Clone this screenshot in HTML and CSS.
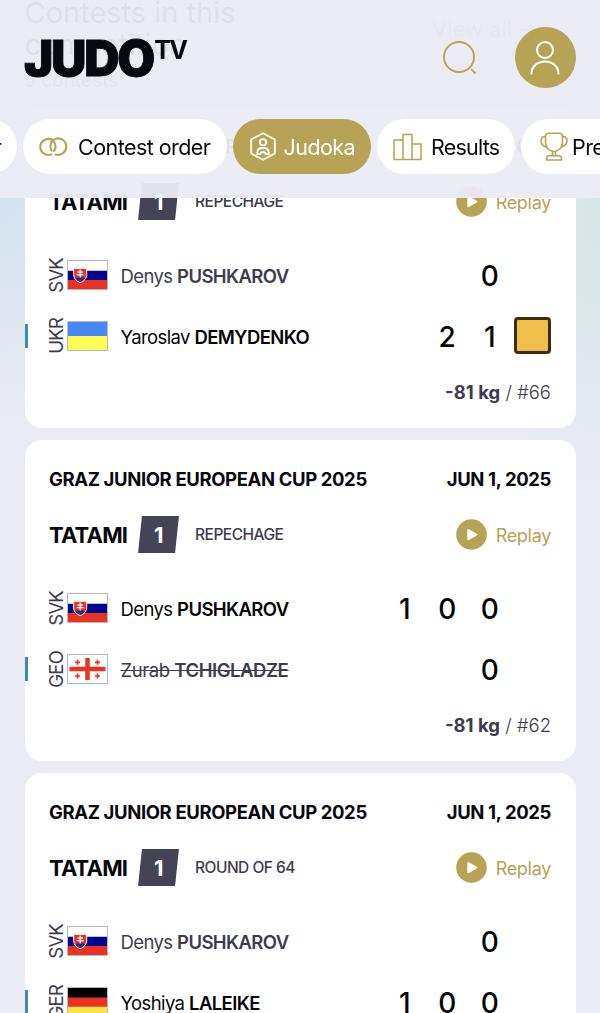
FILE: index.html
```html
<!DOCTYPE html>
<html lang="en">
<head>
  <meta charset="UTF-8">
  <meta name="viewport" content="width=device-width, initial-scale=1.0">
  <title>JudoTV - Judoka</title>
  <link rel="stylesheet" href="styles.css">
</head>
<body>

  <!-- Shared icons -->
  <svg class="sprite" width="0" height="0">
    <symbol id="play" viewBox="0 0 31 31">
      <circle cx="15.5" cy="15.5" r="15.3" fill="#b7a356"/>
      <path d="M12.3 11v9.2l8-4.6z" fill="#fff" stroke="#fff" stroke-width="2" stroke-linejoin="round"/>
    </symbol>
    <symbol id="flag-svk" viewBox="0 0 39 28">
      <path fill="#fff" d="M0 0h39v10H0z"/>
      <path fill="#00078d" d="M0 9.7h39v9.6H0z"/>
      <path fill="#e83323" d="M0 19h39v9H0z"/>
      <path d="M5.7 7.3h13v6.5c0 4-3 6.300-6.500 7.900c-3.500-1.600-6.500-3.900-6.500-7.900z" fill="#e83323" stroke="#fff" stroke-width="1"/>
      <path d="M7.500 17.500q2-2 4.700-1.500q2.700-.5 4.700 1.500q-2 2.400-4.700 3.500q-2.700-1.100-4.700-3.500z" fill="#1b2f8f"/>
      <path d="M12.200 8.500v8M9.600 11h5.200M8.700 13.600h7" stroke="#fff" stroke-width="1.300"/>
    </symbol>
  </svg>

  <!-- Sticky header -->
  <header class="header">
    <div class="topbar">
      <div class="logo"><span class="logo-main">JUDO</span><span class="logo-tv">TV</span></div>
      <div class="actions">
        <svg class="search" width="36" height="36" viewBox="0 0 36 36" fill="none" stroke="#b7a356" stroke-width="1.9">
          <circle cx="17" cy="17" r="15"/>
          <path d="M29.200 29.200l4.300 4.300"/>
        </svg>
        <div class="avatar">
          <svg width="30" height="36" viewBox="0 0 30 36" fill="none" stroke="#fff" stroke-width="2">
            <circle cx="15" cy="10" r="8"/>
            <path d="M1.500 34.500v-1.500a13.500 11.500 0 0 1 27 0v1.500"/>
          </svg>
        </div>
      </div>
    </div>
    <nav class="tabs">
      <div class="tab tab-first">Calendar</div>
      <div class="tab tab-order">
        <svg width="30" height="20" viewBox="0 0 30 20" fill="none" stroke="#b7a356" stroke-width="2.100">
          <path d="M11.800 2.300A8 8 0 1 0 13 17"/>
          <path d="M9.500 1.600q6 .6 7 7.400q.2 3.700-2.200 5.700"/>
          <path d="M16 17.200a8.200 8.200 0 1 0 1-15.500q-5.800 2-5.500 8.300q.3 2.600 1.700 4.200"/>
        </svg>
        <span>Contest order</span>
      </div>
      <div class="tab tab-judoka active">
        <svg width="26" height="29" viewBox="0 0 26 29" fill="none" stroke="#fff" stroke-width="1.800" stroke-linejoin="round">
          <path d="M13 1.200L24.800 7.500v14L13 27.800L1.200 21.500v-14z"/>
          <circle cx="13" cy="10.300" r="3.200"/>
          <path d="M7.300 22.200v-1.700q0-4.500 5.700-4.500t5.700 4.500v1.700h-3q-.4-2.200-2.700-2.200t-2.700 2.200z"/>
        </svg>
        <span>Judoka</span>
      </div>
      <div class="tab tab-results">
        <svg width="29" height="28" viewBox="0 0 29 28" fill="none" stroke="#b7a356" stroke-width="1.500">
          <path d="M1 7h9v19.500H1zM10 1.500h9v25h-9zM19 11h9v15.500h-9z"/>
        </svg>
        <span>Results</span>
      </div>
      <div class="tab tab-prize">
        <svg width="28" height="29" viewBox="0 0 28 29" fill="none" stroke="#b7a356" stroke-width="1.600" stroke-linejoin="round">
          <path d="M5.500 4q0-2.700 3-2.700h11q3 0 3 2.700v6.500q0 7-8.500 9.200q-8.500-2.200-8.500-9.200z"/>
          <path d="M5.500 4.500Q1 4.500 1 9q0 4.500 5.700 6.200M22.500 4.500Q27 4.500 27 9q0 4.500-5.700 6.200M12.500 19.500v4.300M15.500 19.500v4.300M6.500 28v-1.500q0-2.700 3-2.700h9q3 0 3 2.700V28z"/>
        </svg>
        <span>Prelims</span>
      </div>
    </nav>
  </header>

  <!-- Contests -->
  <main class="page">
    <div class="intro">
      <div>
        <h2>Contests in this<br>competition</h2>
        <p>5 contests</p>
      </div>
      <a class="view-all">View all &rarr;</a>
    </div>

    <article class="card">
      <div class="card-head"><span>GRAZ JUNIOR EUROPEAN CUP 2025</span><span class="date">JUN 1, 2025</span></div>
      <div class="mat">
        <b>TATAMI</b><span class="mat-no"><i>1</i></span><span class="round">REPECHAGE</span>
        <a class="replay"><svg width="31" height="31"><use href="#play"/></svg><span>Replay</span></a>
      </div>
      <div class="fighter lost">
        <span class="code">SVK</span>
        <svg class="flag"><use href="#flag-svk"/></svg>
        <span class="name">Denys <b>PUSHKAROV</b></span>
        <span class="score"></span><span class="score"></span><span class="score">0</span><span class="penalty"></span>
      </div>
      <div class="fighter blue">
        <span class="code">UKR</span>
        <svg class="flag" viewBox="0 0 39 28"><path fill="#4688f3" d="M0 0h39v14H0z"/><path fill="#fffd54" d="M0 14h39v14H0z"/></svg>
        <span class="name">Yaroslav <b>DEMYDENKO</b></span>
        <span class="score"></span><span class="score">2</span><span class="score">1</span><span class="penalty shido"></span>
      </div>
      <div class="card-foot"><b>-81 kg</b> / #66</div>
    </article>

    <article class="card">
      <div class="card-head"><span>GRAZ JUNIOR EUROPEAN CUP 2025</span><span class="date">JUN 1, 2025</span></div>
      <div class="mat">
        <b>TATAMI</b><span class="mat-no"><i>1</i></span><span class="round">REPECHAGE</span>
        <a class="replay"><svg width="31" height="31"><use href="#play"/></svg><span>Replay</span></a>
      </div>
      <div class="fighter">
        <span class="code">SVK</span>
        <svg class="flag"><use href="#flag-svk"/></svg>
        <span class="name">Denys <b>PUSHKAROV</b></span>
        <span class="score">1</span><span class="score">0</span><span class="score">0</span><span class="penalty"></span>
      </div>
      <div class="fighter blue lost out">
        <span class="code">GEO</span>
        <svg class="flag" viewBox="0 0 39 28">
          <path fill="#fff" d="M0 0h39v28H0z"/>
          <path d="M19.500 3v22M1.500 14h36" stroke="#e83323" stroke-width="4.500"/>
          <path d="M9.500 4.800v5M7 7.300h5M29.500 4.800v5M27 7.300h5M9.500 18.500v5M7 21h5M29.500 18.500v5M27 21h5" stroke="#e83323" stroke-width="1.700"/>
        </svg>
        <span class="name">Zurab <b>TCHIGLADZE</b></span>
        <span class="score"></span><span class="score"></span><span class="score">0</span><span class="penalty"></span>
      </div>
      <div class="card-foot"><b>-81 kg</b> / #62</div>
    </article>

    <article class="card">
      <div class="card-head"><span>GRAZ JUNIOR EUROPEAN CUP 2025</span><span class="date">JUN 1, 2025</span></div>
      <div class="mat">
        <b>TATAMI</b><span class="mat-no"><i>1</i></span><span class="round">ROUND OF 64</span>
        <a class="replay"><svg width="31" height="31"><use href="#play"/></svg><span>Replay</span></a>
      </div>
      <div class="fighter lost">
        <span class="code">SVK</span>
        <svg class="flag"><use href="#flag-svk"/></svg>
        <span class="name">Denys <b>PUSHKAROV</b></span>
        <span class="score"></span><span class="score"></span><span class="score">0</span><span class="penalty"></span>
      </div>
      <div class="fighter blue">
        <span class="code">GER</span>
        <svg class="flag" viewBox="0 0 39 28"><path d="M0 0h39v10H0z"/><path fill="#e83323" d="M0 9.500h39v9.500H0z"/><path fill="#fbe44b" d="M0 18.800h39V28H0z"/></svg>
        <span class="name">Yoshiya <b>LALEIKE</b></span>
        <span class="score">1</span><span class="score">0</span><span class="score">0</span><span class="penalty"></span>
      </div>
    </article>
  </main>

</body>
</html>
```
FILE: styles.css
```css
* {
  box-sizing: border-box;
  margin: 0;
  padding: 0;
}
body {
  height: 1013px;
  overflow: hidden;
  font-family: Inter, "Liberation Sans", sans-serif;
  font-size: 18px;
  color: #08080f;
  background:
    radial-gradient(ellipse 190px 240px at 0 190px, #d2e2ef 0%, rgba(210, 226, 239, 0) 100%),
    radial-gradient(ellipse 140px 280px at 600px 220px, #d5e6e5 0%, rgba(213, 230, 229, 0) 100%),
    #ebebf5;
}
.sprite {
  position: absolute;
}

/* header */
.header {
  position: fixed;
  top: 0;
  left: 0;
  width: 600px;
  height: 198px;
  background: rgba(235, 235, 243, 0.95);
  z-index: 10;
}
.topbar {
  display: flex;
  justify-content: space-between;
  height: 119px;
  padding: 27px 24.5px 0 24px;
}
.logo {
  display: flex;
  align-items: flex-start;
  padding-top: 13px;
  color: #08080f;
}
.logo-main {
  font-size: 49px;
  font-weight: 900;
  line-height: 37px;
  letter-spacing: -2.2px;
  -webkit-text-stroke: 0.8px #08080f;
}
.logo-tv {
  margin-left: 1px;
  font-size: 25px;
  font-weight: 700;
  line-height: 20px;
  letter-spacing: -1.5px;
}
.actions {
  display: flex;
  align-items: flex-start;
}
.search {
  margin: 13px 36.5px 0 0;
}
.avatar {
  display: flex;
  align-items: center;
  justify-content: center;
  width: 61px;
  height: 61px;
  border-radius: 50%;
  background: #b7a356;
}
.tabs {
  display: flex;
  justify-content: flex-start;
  gap: 6px;
  margin-left: -123px;
  width: 723px;
  overflow: hidden;
}
.tab {
  display: flex;
  align-items: center;
  flex-shrink: 0;
  height: 55px;
  border-radius: 28px;
  background: #fff;
  font-size: 21.5px;
  letter-spacing: -0.55px;
  white-space: nowrap;
}
.tab-first {
  width: 140px;
  justify-content: flex-end;
  padding-right: 16px;
}
.tab-order {
  width: 203.5px;
  padding-left: 16px;
  gap: 9px;
}
.tab-judoka {
  width: 138px;
  padding-left: 17px;
  gap: 8px;
}
.tab-results {
  width: 138px;
  padding-left: 16px;
  gap: 9.5px;
  letter-spacing: -0.8px;
}
.tab-prize {
  width: 150px;
  padding-left: 19.5px;
  gap: 4px;
}
.tab.active {
  background: #b7a356;
  color: #fff;
}

/* contest list */
.page {
  display: flex;
  flex-direction: column;
  gap: 12.3px;
  padding: 0 24.5px;
}
.intro {
  display: flex;
  justify-content: space-between;
  height: 94.7px;
}
.intro h2 {
  margin-top: -3px;
  font-size: 29px;
  font-weight: 400;
  line-height: 32px;
}
.intro p {
  margin-top: 8px;
  font-size: 19px;
  color: #5c5b6a;
}
.view-all {
  margin: 16px 36px 0 0;
  font-size: 22px;
  color: #8d8b92;
}
.card {
  flex-shrink: 0;
  height: 320.7px;
  padding: 26px 24.5px 0;
  border-radius: 17px;
  background: #fff;
}
.card-head {
  display: flex;
  align-items: center;
  justify-content: space-between;
  height: 26px;
  font-size: 18.5px;
  font-weight: 700;
  letter-spacing: -0.38px;
}
.mat {
  display: flex;
  align-items: center;
  height: 36px;
  margin-top: 25px;
}
.mat b {
  width: 91px;
  font-size: 22px;
  font-weight: 700;
  letter-spacing: -0.8px;
}
.mat-no {
  display: flex;
  align-items: center;
  justify-content: center;
  width: 37px;
  height: 37px;
  margin-right: 18px;
  transform: skewX(-6deg);
  background: #454457;
  color: #fff;
}
.mat-no i {
  font-size: 22px;
  font-weight: 700;
  font-style: normal;
  transform: skewX(6deg);
}
.round {
  color: #3d3c4c;
  font-size: 15.5px;
  font-weight: 500;
  letter-spacing: -0.5px;
}
.replay {
  display: flex;
  align-items: center;
  gap: 9px;
  margin-left: auto;
  color: #b7a356;
  font-size: 18px;
  letter-spacing: -0.3px;
}
.replay span {
  padding-top: 2px;
}
.fighter {
  position: relative;
  display: flex;
  align-items: center;
  height: 61px;
  color: #050508;
}
.mat + .fighter {
  margin-top: 24.5px;
}
.fighter.blue::before {
  content: "";
  position: absolute;
  left: -24.5px;
  width: 3.5px;
  height: 24px;
  background: #3b8bb5;
}
.code {
  width: 15px;
  margin-right: 3px;
  writing-mode: vertical-rl;
  transform: rotate(180deg);
  line-height: 15px;
  text-align: center;
  font-size: 18.5px;
  letter-spacing: -0.8px;
  color: #3d3c4c;
}
.flag {
  width: 41px;
  height: 30px;
  border: 1px solid #b9b9bf;
}
.name {
  flex: 1;
  margin-left: 12.5px;
  padding-top: 2px;
  font-size: 18.5px;
  letter-spacing: -0.6px;
  white-space: nowrap;
}
.name b {
  font-weight: 600;
}
.lost .name {
  color: #3d3c4c;
}
.out .name b,
.out .name {
  letter-spacing: -0.45px;
  text-decoration: line-through;
}
.score {
  width: 42.5px;
  padding-top: 3px;
  text-align: center;
  font-size: 28px;
  font-weight: 500;
}
.penalty {
  width: 37px;
  height: 37px;
  margin-left: 3px;
}
.shido {
  border: 3px solid #3d2d12;
  border-radius: 4px;
  background: #f0bf4b;
}
.card-foot {
  height: 26px;
  margin-top: 12.5px;
  line-height: 26px;
  text-align: right;
  font-size: 18.5px;
  font-weight: 300;
  letter-spacing: 0;
  color: #3d3c4c;
}
.card-foot b {
  font-weight: 700;
}
```
